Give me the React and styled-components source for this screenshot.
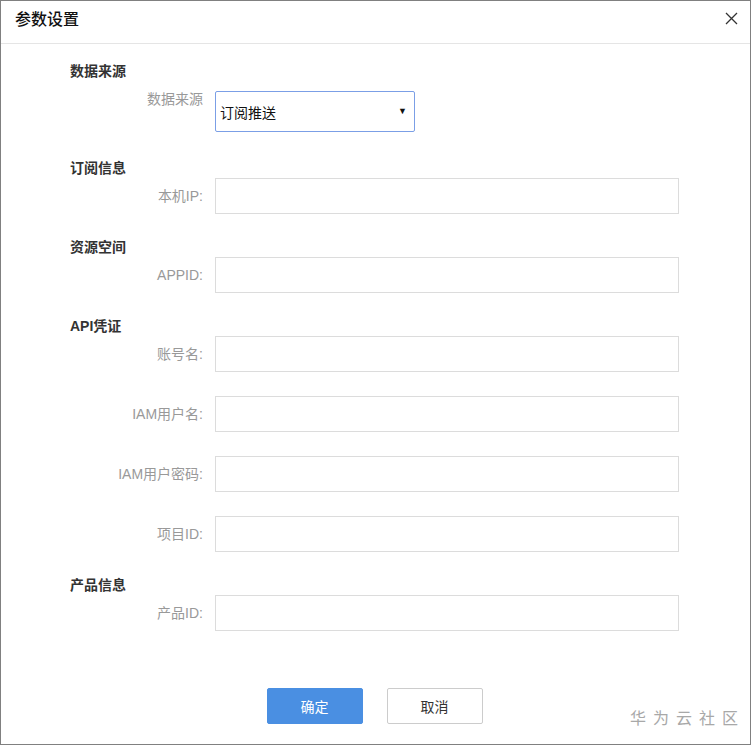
import React from 'react';
import styled, { createGlobalStyle } from 'styled-components';

const GlobalStyle = createGlobalStyle`
  html, body { margin: 0; padding: 0; background: #fff; }
  * { box-sizing: border-box; }
  body { font-family: "Liberation Sans", "Noto Sans CJK SC", Arial, sans-serif; }
`;

export const Dialog = styled.div`
  position: relative;
  width: 751px;
  height: 745px;
  border: 1px solid #808080;
  background: #fff;
  display: flex;
  flex-direction: column;
`;

export const Header = styled.div`
  height: 43px;
  flex-shrink: 0;
  border-bottom: 1px solid #e5e5e5;
  display: flex;
  align-items: center;
  justify-content: space-between;
  padding: 0 8px 8px 14px;
`;

export const Title = styled.div`
  font-size: 16px;
  color: #111;
  font-weight: 500;
`;

export const Close = styled.button`
  border: none;
  background: none;
  padding: 4px;
  display: flex;
  cursor: pointer;
`;

export const Body = styled.div`
  flex: 1;
  padding: 18px 0 0 69px;
`;

export const Section = styled.div`
  display: flex;
  flex-direction: column;
`;

export const SectionTitle = styled.div`
  font-size: 14px;
  font-weight: bold;
  color: #333;
  line-height: 19px;
  height: 19px;
`;

export const Row = styled.div`
  display: flex;
  align-items: ${p => (p.top ? 'flex-start' : 'center')};
  margin: ${p => p.margin || '0 0 24px 0'};
`;

export const Label = styled.div`
  width: 133px;
  margin-right: 12px;
  text-align: right;
  font-size: 14px;
  line-height: 16px;
  color: #999;
`;

export const Input = styled.div`
  width: 464px;
  height: 36px;
  border: 1px solid #dcdcdc;
  background: #fff;
`;

export const Select = styled.div`
  width: 200px;
  height: 41px;
  border: 1px solid #7b9fe6;
  border-radius: 2px;
  display: flex;
  align-items: center;
  justify-content: space-between;
  padding: 0 7px 0 4px;
  font-size: 14px;
  color: #111;
`;

export const Arrow = styled.span`
  font-size: 9px;
  color: #111;
  margin-top: -2px;
`;

export const Footer = styled.div`
  display: flex;
  justify-content: center;
  gap: 24px;
  padding-bottom: 20px;
  margin-left: -2px;
`;

export const Button = styled.button`
  width: 96px;
  height: 36px;
  font-size: 14px;
  font-family: inherit;
  border-radius: 2px;
  cursor: pointer;
  border: 1px solid ${p => (p.primary ? '#4a8fe2' : '#ccc')};
  background: ${p => (p.primary ? '#4a8fe2' : '#fff')};
  color: ${p => (p.primary ? '#fff' : '#333')};
`;

export const Watermark = styled.div`
  position: absolute;
  right: 12px;
  bottom: 15px;
  font-size: 16px;
  letter-spacing: 7px;
  margin-right: -7px;
  color: #a8a8a8;
`;

const sections = [
  { title: '订阅信息', fields: ['本机IP:'] },
  { title: '资源空间', fields: ['APPID:'] },
  { title: 'API凭证', fields: ['账号名:', 'IAM用户名:', 'IAM用户密码:', '项目ID:'] },
  { title: '产品信息', fields: ['产品ID:'] },
];

export default function App() {
  return (
    <>
      <GlobalStyle />
      <Dialog>
        <Header>
          <Title>参数设置</Title>
          <Close aria-label="close">
            <svg width="13" height="13" viewBox="0 0 13 13">
              <path d="M1 1 L12 12 M12 1 L1 12" stroke="#333" strokeWidth="1.3" fill="none" />
            </svg>
          </Close>
        </Header>
        <Body>
          <Section>
            <SectionTitle>数据来源</SectionTitle>
            <Row top margin="10px 0 27px 0">
              <Label>数据来源</Label>
              <Select>
                <span>订阅推送</span>
                <Arrow>▼</Arrow>
              </Select>
            </Row>
          </Section>
          {sections.map(s => (
            <Section key={s.title}>
              <SectionTitle>{s.title}</SectionTitle>
              {s.fields.map(f => (
                <Row key={f}>
                  <Label>{f}</Label>
                  <Input />
                </Row>
              ))}
            </Section>
          ))}
        </Body>
        <Footer>
          <Button primary>确定</Button>
          <Button>取消</Button>
        </Footer>
        <Watermark>华为云社区</Watermark>
      </Dialog>
    </>
  );
}
